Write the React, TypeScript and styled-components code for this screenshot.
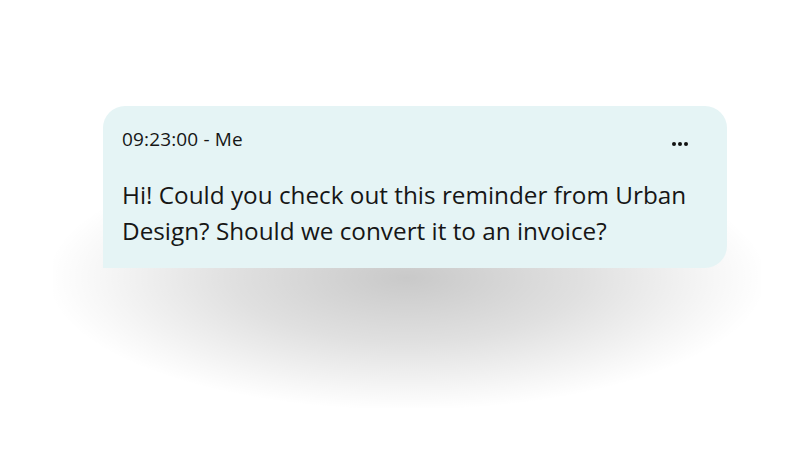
import React from "react";
import styled, { createGlobalStyle } from "styled-components";

const GlobalStyle = createGlobalStyle`
  html, body {
    margin: 0;
    padding: 0;
    background: #ffffff;
  }
  body {
    font-family: "Open Sans", "Noto Sans", sans-serif;
    color: #161616;
  }
`;

const Page = styled.div`
  width: 800px;
  height: 450px;
  box-sizing: border-box;
  padding: 106px 0 0 103px;
  overflow: hidden;
`;

const BubbleWrap = styled.div`
  position: relative;
  width: 624px;

  /* soft floor shadow under the bubble */
  &::before {
    content: "";
    position: absolute;
    left: -50px;
    right: -34px;
    top: 92px;
    height: 210px;
    background: radial-gradient(
      ellipse at 50% 38%,
      rgba(0, 0, 0, 0.21) 0%,
      rgba(0, 0, 0, 0.12) 35%,
      rgba(0, 0, 0, 0.03) 62%,
      rgba(0, 0, 0, 0) 72%
    );
    z-index: 0;
  }
`;

const Bubble = styled.div`
  position: relative;
  z-index: 1;
  box-sizing: border-box;
  height: 162px;
  background: #e5f4f5;
  border-radius: 22px 22px 22px 0;
  padding: 20px 6px 0 19px;
  display: flex;
  flex-direction: column;
`;

const Header = styled.div`
  display: flex;
  align-items: flex-start;
  justify-content: space-between;
  padding-right: 33px;
`;

const Meta = styled.span`
  font-size: 19px;
  line-height: 26px;
  letter-spacing: 0.15px;
  color: #161616;
`;

const MenuButton = styled.button`
  border: 0;
  background: transparent;
  padding: 0;
  margin-top: 15px;
  width: 16px;
  height: 6px;
  display: flex;
  align-items: center;
  justify-content: center;
  cursor: pointer;
`;

const Message = styled.p`
  margin: 25px 0 0;
  font-size: 24.3px;
  line-height: 36px;
  color: #161616;
`;

const Dots = () => (
  <svg width="16" height="6" viewBox="0 0 16 6">
    <circle cx="2" cy="3" r="2" fill="#111" />
    <circle cx="8" cy="3" r="2" fill="#111" />
    <circle cx="14" cy="3" r="2" fill="#111" />
  </svg>
);

export default function App() {
  return (
    <>
      <GlobalStyle />
      <Page>
        <BubbleWrap>
          <Bubble>
            <Header>
              <Meta>09:23:00 - Me</Meta>
              <MenuButton aria-label="More">
                <Dots />
              </MenuButton>
            </Header>
            <Message>
              Hi! Could you check out this reminder from Urban Design? Should
              we convert it to an invoice?
            </Message>
          </Bubble>
        </BubbleWrap>
      </Page>
    </>
  );
}
